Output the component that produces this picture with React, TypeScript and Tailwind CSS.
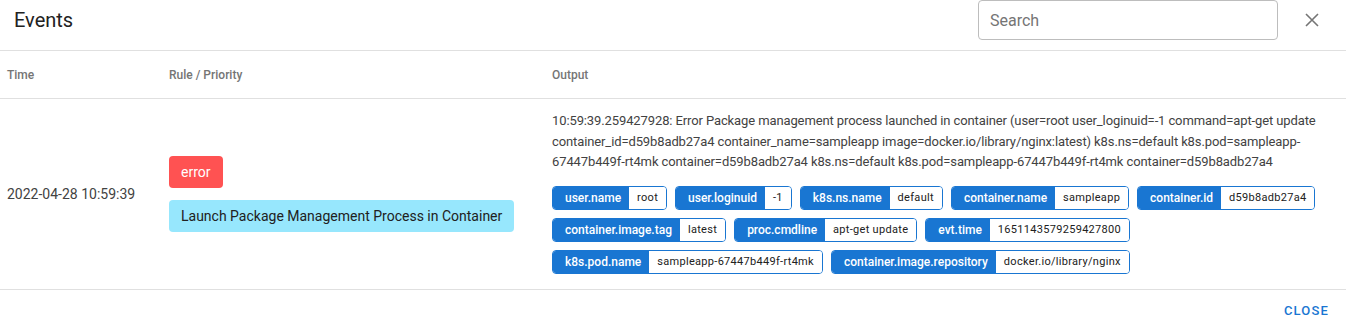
import * as React from "react";

const fields: [string, string][] = [
  ["user.name", "root"],
  ["user.loginuid", "-1"],
  ["k8s.ns.name", "default"],
  ["container.name", "sampleapp"],
  ["container.id", "d59b8adb27a4"],
  ["container.image.tag", "latest"],
  ["proc.cmdline", "apt-get update"],
  ["evt.time", "1651143579259427800"],
  ["k8s.pod.name", "sampleapp-67447b449f-rt4mk"],
  ["container.image.repository", "docker.io/library/nginx"],
];

function FieldChip({ name, value }: { name: string; value: string }) {
  return (
    <div className="flex h-6 items-stretch rounded border border-[#1976d2] overflow-hidden">
      <span className="flex items-center bg-[#1976d2] pl-3 pr-2 text-[12px] font-medium text-white">
        {name}
      </span>
      <span className="flex items-center bg-white px-[8px] text-[11px] tracking-[0.3px] text-[#212121]">
        {value}
      </span>
    </div>
  );
}

export default function App() {
  return (
    <div
      className="flex h-[332px] w-[1346px] flex-col bg-white text-[#212121]"
      style={{ fontFamily: "Roboto, 'Liberation Sans', sans-serif" }}
    >
      {/* Header */}
      <header className="flex h-[51px] items-start justify-between border-b border-[#e0e0e0]">
        <div className="flex h-10 items-center pl-[14px] text-[20px] text-[#212121]">Events</div>
        <div className="flex items-center">
          <input
            placeholder="Search"
            className="h-10 w-[300px] rounded border border-[#bdbdbd] px-[11px] text-[16px] text-[#212121] placeholder:text-[#757575] outline-none"
          />
          <button className="flex h-10 w-[68px] items-center justify-center text-[#757575]">
            <svg width="14" height="14" viewBox="0 0 14 14" fill="none" stroke="currentColor" strokeWidth="1.6">
              <path d="M1 1 L13 13 M13 1 L1 13" />
            </svg>
          </button>
        </div>
      </header>

      {/* Table header */}
      <div className="grid h-12 grid-cols-[162px_383px_1fr] items-center border-b border-[#e0e0e0] text-[12px] font-medium text-[#757575]">
        <div className="pl-[7px]">Time</div>
        <div className="pl-[7px]">Rule / Priority</div>
        <div className="pl-[7px]">Output</div>
      </div>

      {/* Row */}
      <div className="grid h-[191px] grid-cols-[162px_383px_1fr] items-center border-b border-[#e0e0e0]">
        <div className="pl-[7px] text-[14px] text-[#424242]">2022-04-28 10:59:39</div>
        <div className="flex flex-col items-start gap-3 pl-[7px]">
          <span className="flex h-8 items-center rounded bg-[#ff5252] px-3 text-[14px] text-white">error</span>
          <span className="flex h-8 items-center rounded bg-[#97e7fd] px-3 text-[14px] text-[#212121]">
            Launch Package Management Process in Container
          </span>
        </div>
        <div className="pb-[3px] pl-[7px] pr-4">
          <p className="text-[13px] leading-[20.5px] tracking-[-0.11px] text-[#424242]">
            10:59:39.259427928: Error Package management process launched in container (user=root user_loginuid=-1
            command=apt-get update container_id=d59b8adb27a4 container_name=sampleapp image=docker.io/library/nginx:latest)
            k8s.ns=default k8s.pod=sampleapp-67447b449f-rt4mk container=d59b8adb27a4 k8s.ns=default
            k8s.pod=sampleapp-67447b449f-rt4mk container=d59b8adb27a4
          </p>
          <div className="mt-[13px] flex flex-wrap gap-x-2 gap-y-2">
            {fields.map(([n, v]) => (
              <FieldChip key={n} name={n} value={v} />
            ))}
          </div>
        </div>
      </div>

      {/* Footer */}
      <div className="flex flex-1 items-center justify-end pr-[13px]">
        <button className="px-1 text-[13px] font-medium uppercase tracking-[0.09em] text-[#1976d2]">Close</button>
      </div>
    </div>
  );
}
